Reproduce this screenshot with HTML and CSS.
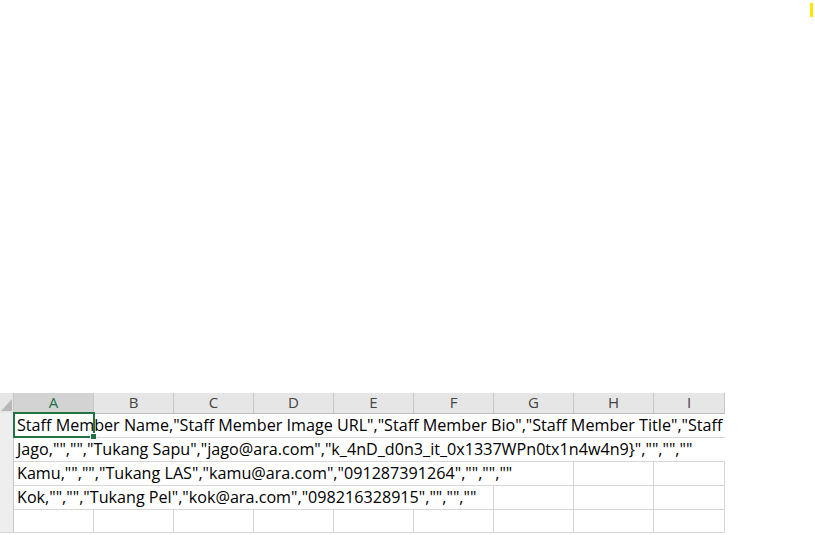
FILE: index.html
```html
<!DOCTYPE html>
<html>
<head>
<meta charset="utf-8">
<link rel="stylesheet" href="styles.css">
</head>
<body>
<div class="page">
  <div class="marker"></div>
  <div class="sheet">
    <div class="row head">
      <div class="corner"><svg width="14" height="20" viewBox="0 0 14 20"><polygon points="12,6 12,18 1,18" fill="#b8b8b8"/></svg></div>
      <div class="ch sel">A</div>
      <div class="ch">B</div>
      <div class="ch">C</div>
      <div class="ch">D</div>
      <div class="ch">E</div>
      <div class="ch">F</div>
      <div class="ch">G</div>
      <div class="ch">H</div>
      <div class="ch">I</div>
    </div>
    <div class="row">
      <div class="rh"></div>
      <div class="cell text span9">Staff Member Name,"Staff Member Image URL","Staff Member Bio","Staff Member Title","Staff Member Email"<div class="selbox"></div></div>
    </div>
    <div class="row">
      <div class="rh"></div>
      <div class="cell text span9">Jago,"","","Tukang Sapu","jago@ara.com","k_4nD_d0n3_it_0x1337WPn0tx1n4w4n9}","","",""</div>
    </div>
    <div class="row">
      <div class="rh"></div>
      <div class="cell text span7">Kamu,"","","Tukang LAS","kamu@ara.com","091287391264","","",""</div>
      <div class="cell"></div>
      <div class="cell"></div>
    </div>
    <div class="row">
      <div class="rh"></div>
      <div class="cell text span6">Kok,"","","Tukang Pel","kok@ara.com","098216328915","","",""</div>
      <div class="cell"></div>
      <div class="cell"></div>
      <div class="cell"></div>
    </div>
    <div class="row">
      <div class="rh"></div>
      <div class="cell"></div>
      <div class="cell"></div>
      <div class="cell"></div>
      <div class="cell"></div>
      <div class="cell"></div>
      <div class="cell"></div>
      <div class="cell"></div>
      <div class="cell"></div>
      <div class="cell"></div>
    </div>
  </div>
</div>
</body>
</html>
```
FILE: styles.css
```css
html, body {
  margin: 0;
  padding: 0;
  background: #ffffff;
}
.page {
  position: relative;
  width: 815px;
  height: 535px;
  overflow: hidden;
  padding-top: 393px;
  box-sizing: border-box;
}
.marker {
  position: absolute;
  left: 810px;
  top: 3px;
  width: 3px;
  height: 14px;
  background: #ffe500;
}
.sheet {
  width: 725px;
  overflow: hidden;
  font-family: "Open Sans", sans-serif;
  font-size: 16.15px;
  color: #000;
}
.row {
  display: grid;
  grid-template-columns: 14px repeat(8, 80px) 71px;
  height: 24px;
}
.row.head {
  height: 20px;
  background: #e6e6e6;
}
.corner {
  border-right: 1px solid #c8c8c8;
  border-bottom: 1px solid #c8c8c8;
  box-sizing: border-box;
  background: #e6e6e6;
}
.corner svg { display: block; }
.ch {
  box-sizing: border-box;
  border-right: 1px solid #c8c8c8;
  border-bottom: 1px solid #bdbdbd;
  text-align: center;
  line-height: 19px;
  font-family: "Open Sans", sans-serif;
  font-size: 15px;
  color: #444;
}
.ch.sel {
  background: #d3d3d3;
  color: #217346;
  border-bottom: 2px solid #217346;
}
.rh {
  box-sizing: border-box;
  background: #eeeeee;
  border-right: 1px solid #c8c8c8;
  border-bottom: 1px solid #d6d6d6;
}
.cell {
  box-sizing: border-box;
  border-right: 1px solid #d6d6d6;
  border-bottom: 1px solid #d6d6d6;
  position: relative;
}
.cell.text {
  white-space: nowrap;
  line-height: 24px;
  padding-left: 3px;
  overflow: visible;
}
.span9 { grid-column: 2 / span 9; border-right: none; }
.span7 { grid-column: 2 / span 7; }
.span6 { grid-column: 2 / span 6; }
.selbox {
  position: absolute;
  left: -1px;
  top: -1px;
  width: 82px;
  height: 26px;
  border: 2px solid #217346;
  box-sizing: border-box;
}
.selbox::after {
  content: "";
  position: absolute;
  right: -4px;
  bottom: -4px;
  width: 5px;
  height: 5px;
  background: #217346;
  border: 1px solid #fff;
}
```
